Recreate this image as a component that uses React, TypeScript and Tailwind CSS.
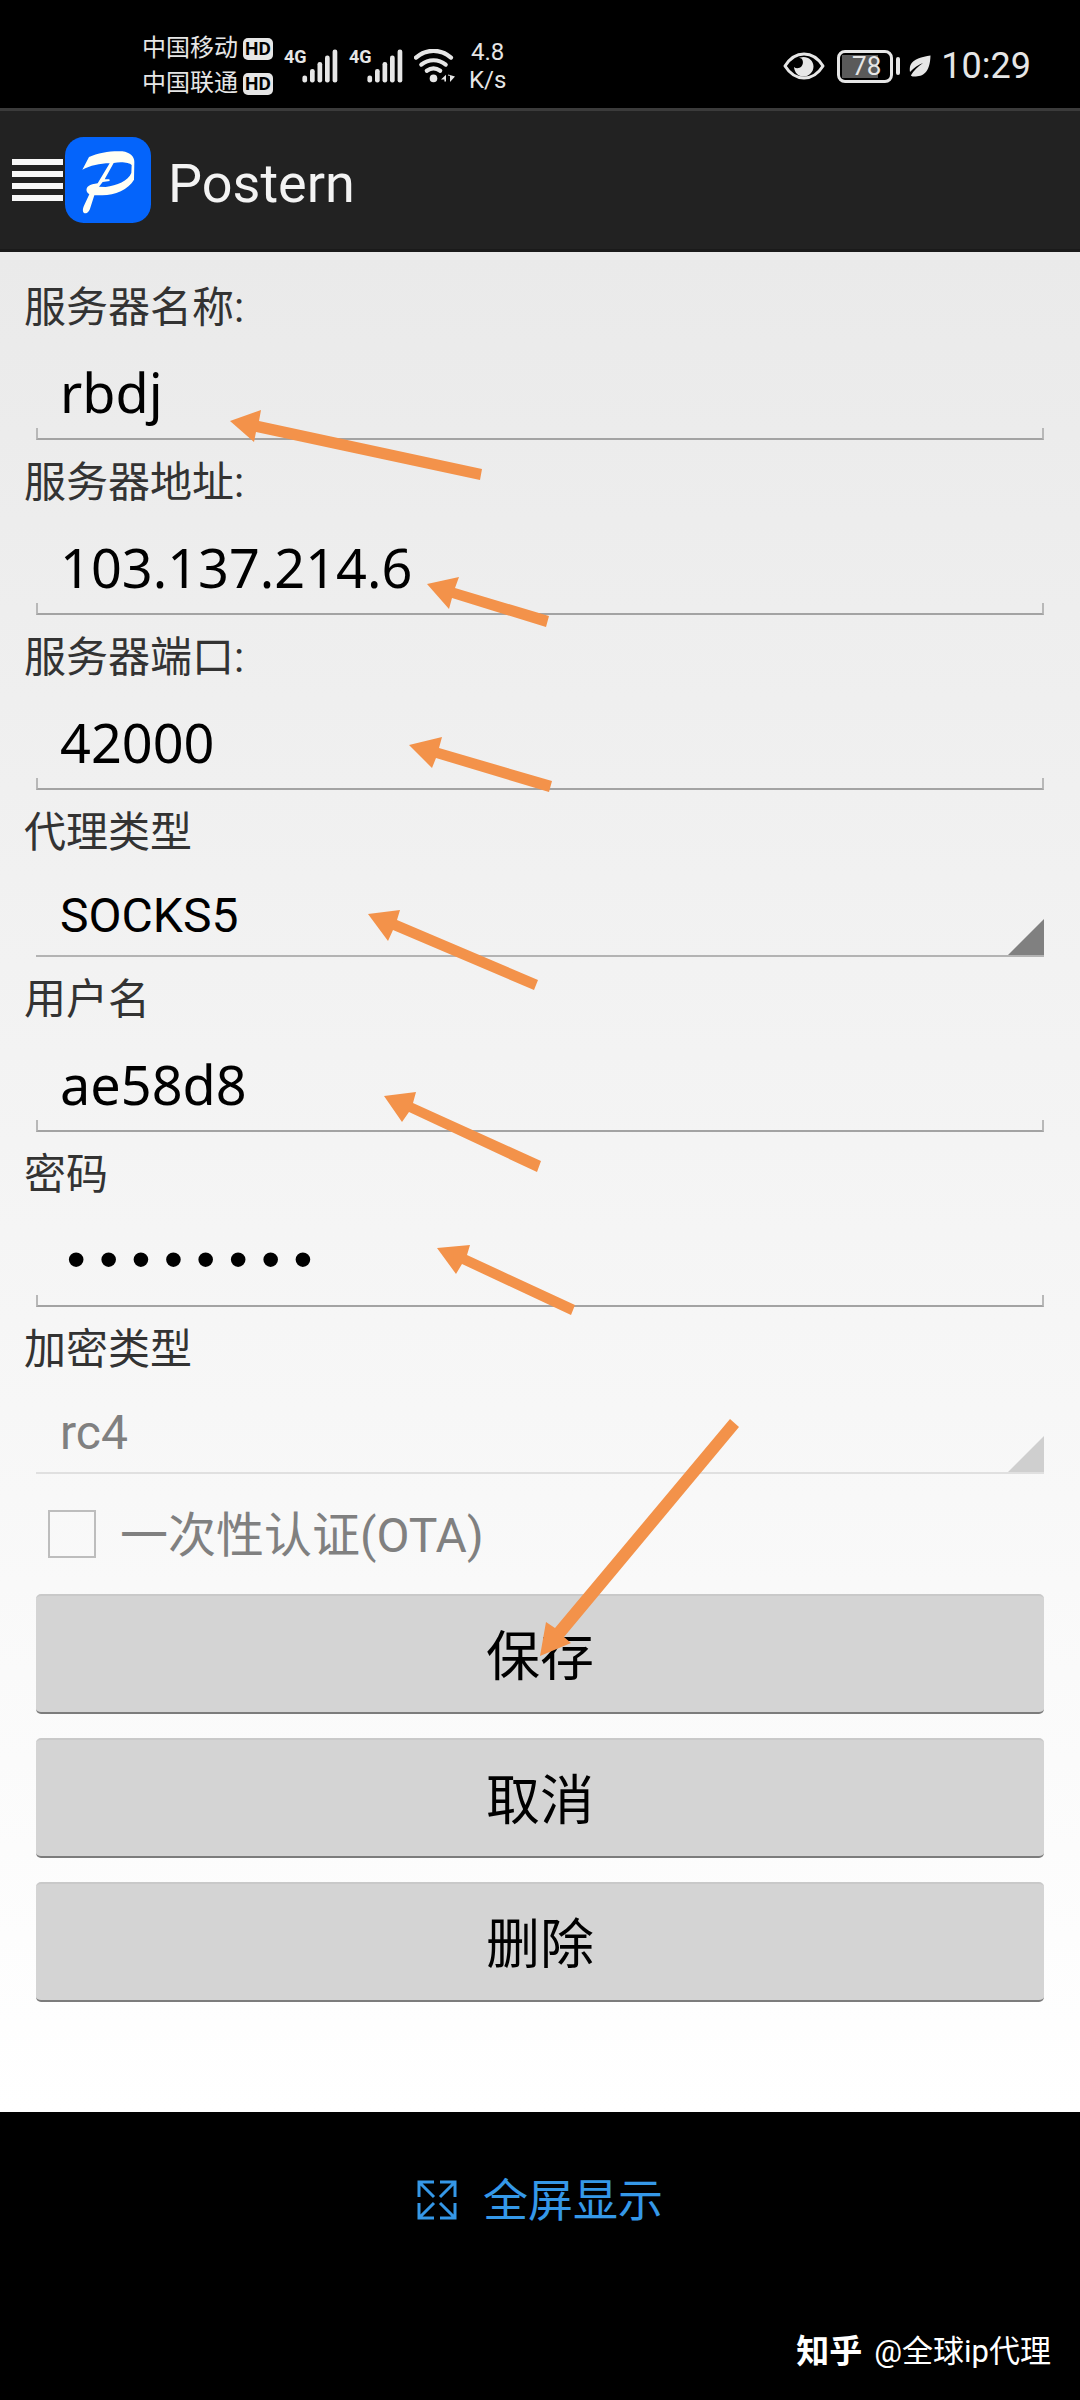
import { useState } from "react";
import type { ReactNode } from "react";

function SignalBars() {
  return (
    <div className="relative h-[34px] w-[54px]">
      <span className="absolute left-0 top-0 text-[18px] leading-[16px] font-bold">4G</span>
      <svg className="absolute bottom-0 right-0 h-[34px] w-[36px]" viewBox="0 0 36 34" fill="currentColor" aria-hidden="true">
        <rect x="0.4" y="26.5" width="4.7" height="7" rx="2.2" />
        <rect x="8" y="20" width="4.7" height="13.5" rx="2.2" />
        <rect x="15.5" y="13" width="4.7" height="20.5" rx="2.2" />
        <rect x="23" y="6.5" width="4.7" height="27" rx="2.2" />
        <rect x="30.6" y="0.5" width="4.7" height="33" rx="2.2" />
      </svg>
    </div>
  );
}

function Carrier({ name }: { name: string }) {
  return (
    <div className="flex h-[35px] items-center gap-[5px]">
      <span className="text-[24px] leading-[35px]">{name}</span>
      <span className="flex h-[22px] w-[30px] items-center justify-center rounded-[5px] bg-[#e6e6e6] text-[19px] leading-[22px] font-bold text-black">
        HD
      </span>
    </div>
  );
}

function StatusBar() {
  return (
    <div className="flex h-[108px] items-center justify-between bg-black pt-[24px] pr-[49px] pl-[142px] text-[#e6e6e6]">
      <div className="flex items-center">
        <div className="flex flex-col">
          <Carrier name="中国移动" />
          <Carrier name="中国联通" />
        </div>
        <div className="ml-[11px] flex items-center gap-[11px]">
          <SignalBars />
          <SignalBars />
          <svg className="h-[34px] w-[42px]" viewBox="0 0 42 34" fill="none" stroke="currentColor" strokeLinecap="round" aria-hidden="true">
            <path d="M2 8.6C12.500 -0.500 26.500 -0.500 37 8.600" strokeWidth="4.200" />
            <path d="M7.300 15.600C14.500 9.800 24.500 9.800 31.700 15.600" strokeWidth="4.200" />
            <path d="M12.800 21.800C17 18.800 22 18.800 26.200 21.800" strokeWidth="4.200" />
            <circle cx="19.500" cy="29.400" r="3.800" fill="currentColor" stroke="none" />
            <path d="M27 30.400L32 25.800V32.600H30.400V30.400ZM34.200 25.600L41 27.600L36 33V26.800H34.200Z" fill="currentColor" stroke="none" />
          </svg>
        </div>
        <div className="ml-[13px] text-center text-[24px] leading-[28px]">
          4.8
          <br />
          K/s
        </div>
      </div>
      <div className="flex items-center">
        <svg className="h-[28px] w-[42px]" viewBox="0 0 42 28" aria-hidden="true">
          <path d="M2 14C7 6 13 2 21 2S35 6 40 14C35 22 29 26 21 26S7 22 2 14Z" fill="none" stroke="currentColor" strokeWidth="3" strokeLinejoin="round" />
          <path d="M20.500 5C26 5 30.500 9 30.500 14.600S26 24.500 20.500 24.500S11.500 20.400 11 15C13 16.800 16.500 16.500 18.400 14.500C20.500 12.200 20.400 8.500 18.400 6.500L16 5.700Z" fill="currentColor" />
          <circle cx="14" cy="10.500" r="3" fill="#000" />
        </svg>
        <div className="ml-[12px] flex items-center gap-[3px]">
          <div className="flex h-[33px] w-[56px] rounded-[8px] border-[3px] border-current p-[2px]">
            <div className="flex h-full w-[36px] items-center justify-end bg-[#5a5a5a]">
              <span className="-mr-[3px] text-[26px] leading-[26px]">78</span>
            </div>
          </div>
          <div className="h-[18px] w-[4px] rounded-[2px] bg-current" />
        </div>
        <svg className="ml-[9px] h-[22px] w-[22px]" viewBox="0 0 22 22" fill="currentColor" aria-hidden="true">
          <path d="M21.500 0.500C13 2 4 4 1.500 10C0.600 12.500 0.600 15 1 17C5 12.500 9.500 10 14 8C9 11.500 4.500 15.500 1.800 20.500L3.500 21.500C13 22 21 19 21.500 0.500Z" />
        </svg>
        <span className="ml-[10px] text-[36px] leading-[44px]">10:29</span>
      </div>
    </div>
  );
}

function Header() {
  return (
    <header className="flex h-[144px] items-center border-t-[3px] border-b-[3px] border-t-[#3b3b3b] border-b-[#1a1a1a] bg-[#222222] pl-[12px]">
      <button type="button" aria-label="Menu" className="flex w-[51px] flex-col gap-[6px]">
        <span className="h-[6px] w-full bg-[#f8f8f8]" />
        <span className="h-[6px] w-full bg-[#f8f8f8]" />
        <span className="h-[6px] w-full bg-[#f8f8f8]" />
        <span className="h-[6px] w-full bg-[#f8f8f8]" />
      </button>
      <svg className="ml-[2px] h-[86px] w-[86px]" viewBox="0 0 258 258" aria-hidden="true">
        <rect width="258" height="258" rx="56" fill="#0464fb" />
        <path
          fill="#fffff4"
          fillRule="evenodd"
          d="M52 98L72 60C100 47 140 41 172 43C196 46 208 60 208 75L207 128C190 158 150 174 112 175L88 175L76 212C73 224 64 232 57 228C51 223 54 212 59 202L73 172C58 162 64 146 82 142L98 139L134 79C105 79 75 86 52 98ZM146 78C166 73 194 76 200 84L199 108C190 132 155 146 122 150L102 149L113 135L134 132L133 127L119 127Z"
        />
      </svg>
      <h1 className="ml-[17px] pt-[8px] text-[54px] leading-[64px] text-[#f3f3f3]">Postern</h1>
    </header>
  );
}

const labelClass = "block pl-[24px] text-[42px] leading-[56px] text-[#333333]";

function TextField({ id, label, value, type = "text" }: { id: string; label: string; value: string; type?: "text" | "password" }) {
  const [text, setText] = useState(value);
  return (
    <div>
      <label htmlFor={id} className={labelClass}>
        {label}
      </label>
      <div className="px-[36px] pb-[15px]">
        <input
          id={id}
          type={type}
          value={text}
          onChange={(e) => setText(e.target.value)}
          className={
            type === "password"
              ? "block h-[92px] w-full bg-transparent px-[24px] pt-[28px] font-['Liberation_Mono',monospace] text-[54px] text-black outline-none"
              : "block h-[92px] w-full bg-transparent px-[24px] pt-[20px] font-['Noto_Sans',sans-serif] text-[54px] text-black outline-none"
          }
        />
        <div className="h-[12px] border-x-[2px] border-b-[2px] border-x-[#b8b8b8] border-b-[#a3a3a3]" />
      </div>
    </div>
  );
}

function SelectField({ id, label, options, disabled = false }: { id: string; label: string; options: string[]; disabled?: boolean }) {
  return (
    <div>
      <label htmlFor={id} className={labelClass}>
        {label}
      </label>
      <div className="px-[36px] pb-[15px]">
        <div className={disabled ? "relative border-b-[2px] border-[#e0e0e0] text-[#cfcfcf]" : "relative border-b-[2px] border-[#b3b3b3] text-[#808080]"}>
          <select
            id={id}
            disabled={disabled}
            className={
              disabled
                ? "block h-[94px] w-full appearance-none bg-transparent px-[24px] pt-[16px] text-[48px] text-[#808080] opacity-100 outline-none"
                : "block h-[94px] w-full appearance-none bg-transparent px-[24px] pt-[16px] text-[48px] text-black outline-none"
            }
          >
            {options.map((o) => (
              <option key={o}>{o}</option>
            ))}
          </select>
          <svg className="pointer-events-none absolute right-0 bottom-0 h-[36px] w-[36px]" viewBox="0 0 36 36" fill="currentColor" aria-hidden="true">
            <path d="M36 0V36H0Z" />
          </svg>
        </div>
      </div>
    </div>
  );
}

function FormButton({ children }: { children: ReactNode }) {
  return (
    <button
      type="button"
      className="h-[120px] w-full rounded-[5px] border-t-[2px] border-b-[2px] border-t-[#c9c9c9] border-b-[#7c7c7c] bg-[#d4d4d4] pt-[8px] text-[54px] leading-[64px] text-black"
    >
      {children}
    </button>
  );
}

const arrows = [
  "230,421 261,410 259,421 482,469 480,480 256,432 254,442",
  "427,584 459,577 455,588 549,616 546,627 452,598 449,609",
  "409,745 442,737 439,748 552,781 549,792 436,758 432,768",
  "368,914 400,910 397,920 538,980 534,990 393,930 388,941",
  "384,1096 416,1092 413,1103 541,1161 537,1172 409,1112 402,1122",
  "437,1248 470,1245 467,1255 575,1305 571,1315 462,1264 456,1274",
  "540,1656 546,1622 555,1628 730,1419 739,1427 564,1637 571,1643",
];

export default function App() {
  return (
    <div className="min-h-screen bg-black font-[Roboto,'Noto_Sans_CJK_SC',sans-serif]">
      <StatusBar />
      <Header />
      <main className="relative bg-linear-to-b from-[#eaeaea] to-white">
        <form className="pt-[28px] pb-[110px]">
          <TextField id="name" label="服务器名称:" value="rbdj" />
          <TextField id="address" label="服务器地址:" value="103.137.214.6" />
          <TextField id="port" label="服务器端口:" value="42000" />
          <SelectField id="proxy" label="代理类型" options={["SOCKS5"]} />
          <TextField id="user" label="用户名" value="ae58d8" />
          <TextField id="password" label="密码" value="password" type="password" />
          <SelectField id="cipher" label="加密类型" options={["rc4"]} disabled />
          <div className="flex h-[90px] items-center gap-[24px] pl-[48px]">
            <input id="ota" type="checkbox" disabled className="h-[48px] w-[48px] appearance-none border-[2px] border-[#bdbdbd]" />
            <label htmlFor="ota" className="pt-[4px] text-[48px] leading-[60px] text-[#808080]">
              一次性认证(OTA)
            </label>
          </div>
          <div className="flex flex-col gap-[24px] px-[36px] pt-[15px]">
            <FormButton>保存</FormButton>
            <FormButton>取消</FormButton>
            <FormButton>删除</FormButton>
          </div>
        </form>
        <svg className="pointer-events-none absolute inset-0 h-full w-full" viewBox="0 252 1080 1860" preserveAspectRatio="none" fill="#f3924a" aria-hidden="true">
          {arrows.map((points) => (
            <polygon key={points} points={points} />
          ))}
        </svg>
      </main>
      <footer className="flex flex-col gap-[92px] pt-[56px] pb-[20px]">
        <button type="button" className="flex items-center gap-[26px] self-center text-[45px] leading-[60px] text-[#3598e8]">
          <svg className="h-[40px] w-[40px]" viewBox="0 0 40 40" fill="none" stroke="currentColor" strokeWidth="3" aria-hidden="true">
            <path d="M17 2H2V17M2 2L17 17M23 2H38V17M38 2L23 17M2 23V38H17M2 38L17 23M38 23V38H23M38 38L23 23" />
          </svg>
          <span className="pt-[4px]">全屏显示</span>
        </button>
        <div className="flex items-center gap-[12px] self-end pr-[29px] leading-[56px] text-white">
          <span className="text-[33px] font-bold">知乎</span>
          <span className="text-[31px]">@全球ip代理</span>
        </div>
      </footer>
    </div>
  );
}
